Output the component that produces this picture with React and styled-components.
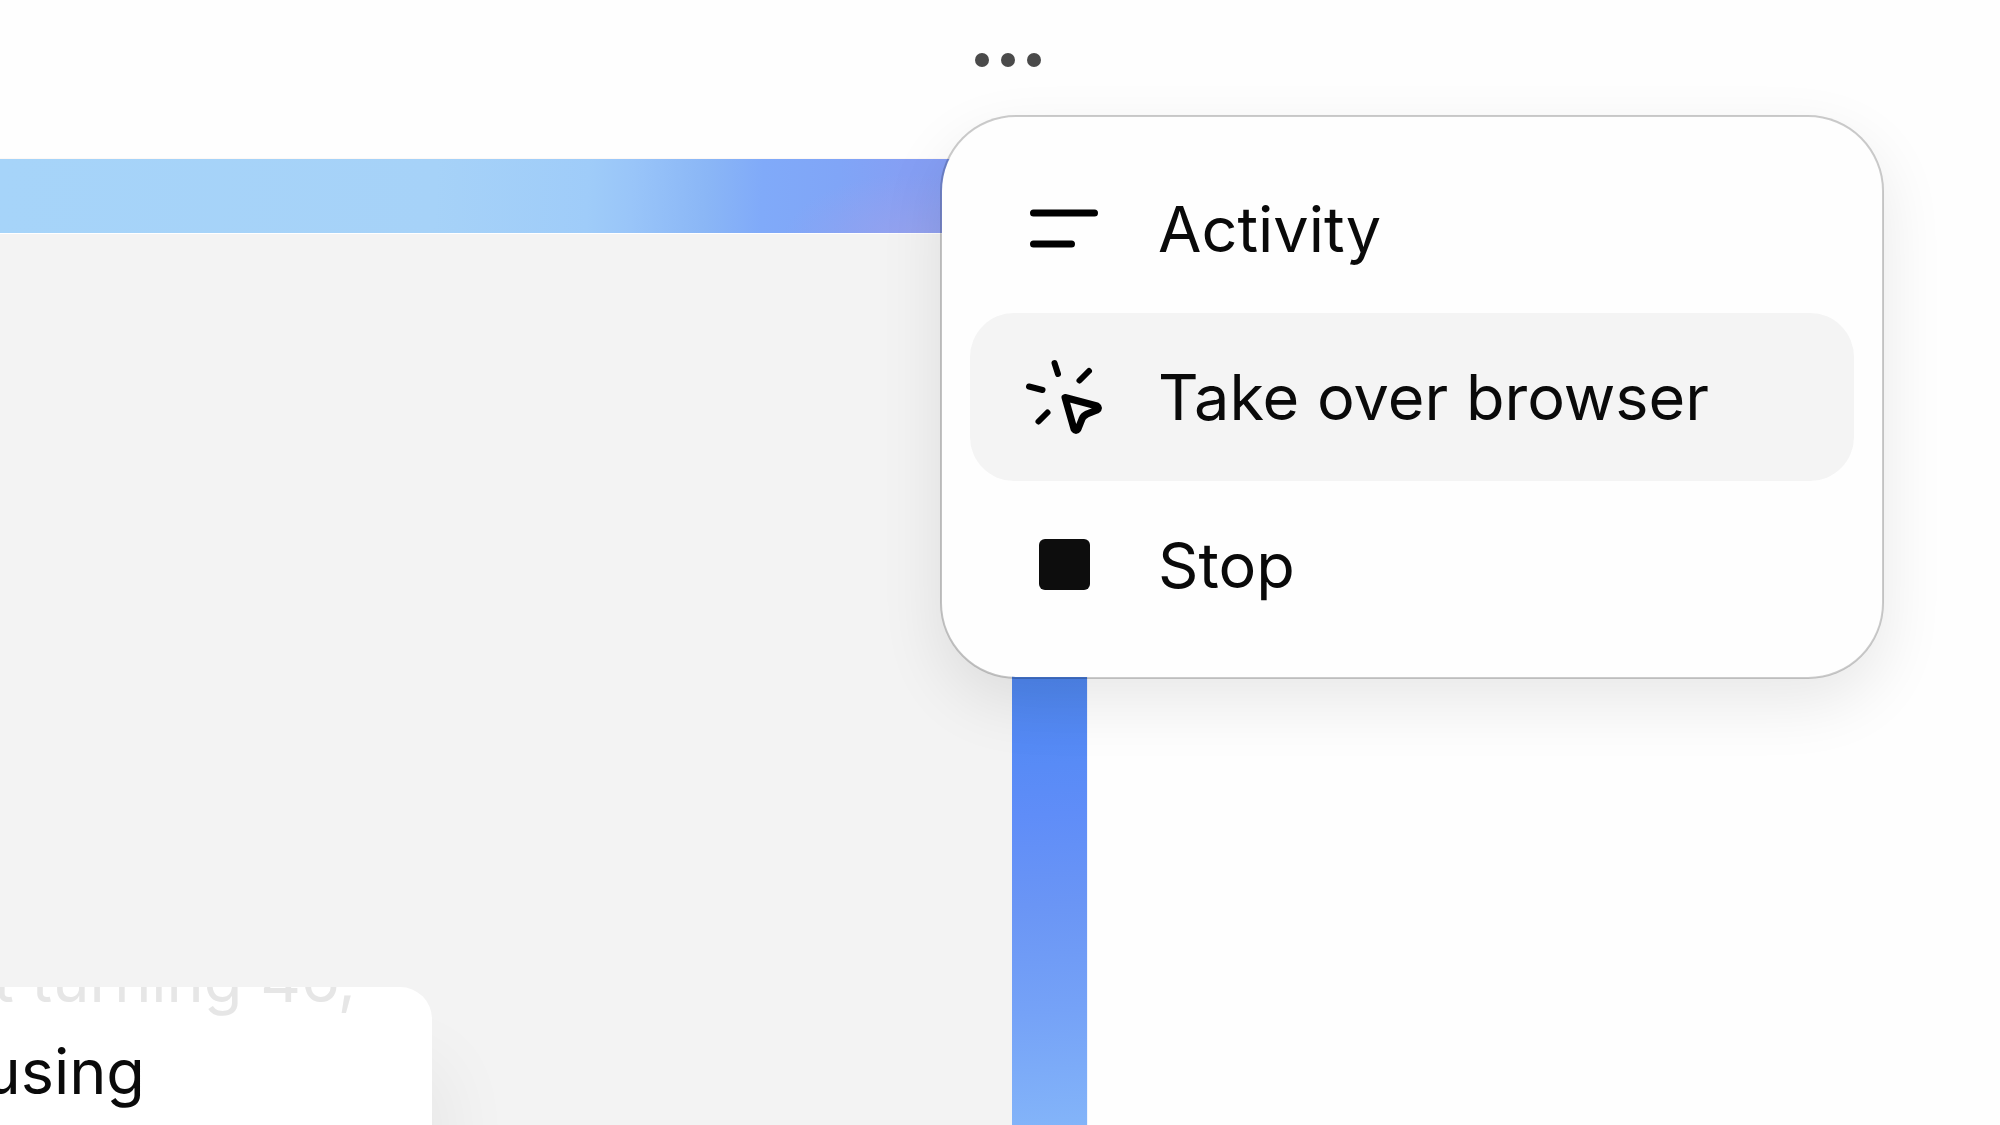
import React from 'react';
import styled, { createGlobalStyle } from 'styled-components';

const GlobalStyle = createGlobalStyle`
  * {
    box-sizing: border-box;
  }
  body {
    margin: 0;
    background: #fefefe;
    font-family: Inter, 'Liberation Sans', sans-serif;
    font-size: 63px;
    color: #0a0a0a;
  }
`;

const Page = styled.main`
  display: flex;
  flex-direction: column;
  width: 54.4%;
  height: 100vh;
`;

const Header = styled.header`
  display: flex;
  justify-content: flex-end;
  height: 159px;
  padding: 24px 44px 0 0;
  border-bottom: 1px solid #fdf8f5;
`;

const MenuAnchor = styled.div`
  position: relative;
  z-index: 1;
`;

const MoreButton = styled.button`
  display: flex;
  width: 72px;
  height: 72px;
  padding: 0;
  border: 0;
  background: none;
  color: #4a4a4a;
  cursor: pointer;
`;

const Menu = styled.div`
  position: absolute;
  top: 91px;
  left: -32px;
  width: 47.2vw;
  padding: 28px;
  border: 2px solid rgba(0, 0, 0, 0.2);
  border-radius: 76px;
  background: #fefefe;
  background-clip: padding-box;
  box-shadow: 0 24px 64px rgba(0, 0, 0, 0.09);
`;

const MenuItem = styled.button`
  display: flex;
  align-items: center;
  gap: 56px;
  width: 100%;
  height: 168px;
  padding: 0 56px;
  border: 0;
  border-radius: 44px;
  background: ${props => (props.$active ? '#f4f4f4' : 'transparent')};
  color: inherit;
  font: inherit;
  text-align: left;
  white-space: nowrap;
  cursor: pointer;
`;

const Icon = styled.svg`
  flex: none;
  width: 76px;
  height: 76px;
  overflow: visible;
  fill: none;
  stroke: #000;
  stroke-width: 7px;
  stroke-linecap: round;
  stroke-linejoin: round;
`;

const Browser = styled.section`
  display: grid;
  flex: 1;
  grid-template-columns: 1fr 76px;
  grid-template-rows: 75px 1fr;
  min-height: 0;
`;

const TopGlow = styled.div`
  grid-column: 1 / 3;
  border-bottom: 1px solid #fff;
  background:
    radial-gradient(ellipse 12% 90% at 84% 110%, #95a2ee 0%, rgba(149, 162, 238, 0) 100%),
    linear-gradient(
      92deg,
      #a6d4f9 0%,
      #a6d2f8 40%,
      #9fccf9 54%,
      #99c5f9 58%,
      #8ab6f6 65%,
      #80aaf9 70%,
      #80a5f7 77%,
      #859ff4 83%,
      #859af2 100%
    );
`;

const SideGlow = styled.div`
  border-right: 1px solid #eef3fd;
  background: linear-gradient(
    176deg,
    #4f86ee 0%,
    #4f86ee 50%,
    #558af5 57%,
    #5f8df8 65%,
    #6a95f5 75%,
    #75a2f7 87%,
    #83b4f9 100%
  );
`;

const Viewport = styled.div`
  display: flex;
  align-items: flex-end;
  overflow: hidden;
  background: #f3f3f3;
`;

const ChatCard = styled.article`
  display: flex;
  flex-direction: column;
  justify-content: flex-end;
  width: 432px;
  height: 138px;
  padding-bottom: 8px;
  overflow: hidden;
  border-radius: 0 32px 0 0;
  background: #fff;
`;

const CardShadow = styled.div`
  border-radius: 0 32px 0 0;
  box-shadow: 16px 72px 72px rgba(0, 0, 0, 0.05);
`;

const ChatLine = styled.p`
  display: flex;
  flex: none;
  justify-content: flex-end;
  width: ${props => props.$end}px;
  margin: 0;
  color: ${props => (props.$faded ? '#e6e6e6' : '#0a0a0a')};
  line-height: 92px;
  white-space: nowrap;
`;

const ActivityIcon = () => (
  <Icon viewBox="0 0 76 76" aria-hidden="true">
    <path d="M7.5 22H68.5M7.5 53H45.5" />
  </Icon>
);

const TakeOverIcon = () => (
  <Icon viewBox="0 0 76 76" aria-hidden="true">
    <path strokeWidth="6" d="M28.5 4 32 15M63 12 53.5 21.5M3 27.5 16.5 31M21.5 53.5 12.5 62.5" />
    <path d="M39 38.5 71 47Q74 49 71 51L61 55Q57 57 56 60L52 70Q50 73 48 70Z" />
  </Icon>
);

const StopIcon = () => (
  <Icon viewBox="0 0 76 76" aria-hidden="true">
    <rect x="13" y="12" width="51" height="51" rx="6" fill="#0d0d0d" stroke="none" />
  </Icon>
);

const items = [
  { label: 'Activity', icon: ActivityIcon },
  { label: 'Take over browser', icon: TakeOverIcon, active: true },
  { label: 'Stop', icon: StopIcon },
];

export default function App() {
  return (
    <>
      <GlobalStyle />
      <Page>
        <Header>
          <MenuAnchor>
            <MoreButton aria-label="More" aria-haspopup="menu" aria-expanded="true">
              <svg width="72" height="72" viewBox="0 0 72 72" fill="currentColor">
                <circle cx="10" cy="36" r="7" />
                <circle cx="36" cy="36" r="7" />
                <circle cx="62" cy="36" r="7" />
              </svg>
            </MoreButton>
            <Menu role="menu">
              {items.map(({ label, icon: ItemIcon, active }) => (
                <MenuItem key={label} role="menuitem" $active={active}>
                  <ItemIcon />
                  {label}
                </MenuItem>
              ))}
            </Menu>
          </MenuAnchor>
        </Header>
        <Browser>
          <TopGlow />
          <Viewport>
            <CardShadow>
              <ChatCard>
                <ChatLine $end={356} $faded>t turning 46,</ChatLine>
                <ChatLine $end={145}>using</ChatLine>
              </ChatCard>
            </CardShadow>
          </Viewport>
          <SideGlow />
        </Browser>
      </Page>
    </>
  );
}
